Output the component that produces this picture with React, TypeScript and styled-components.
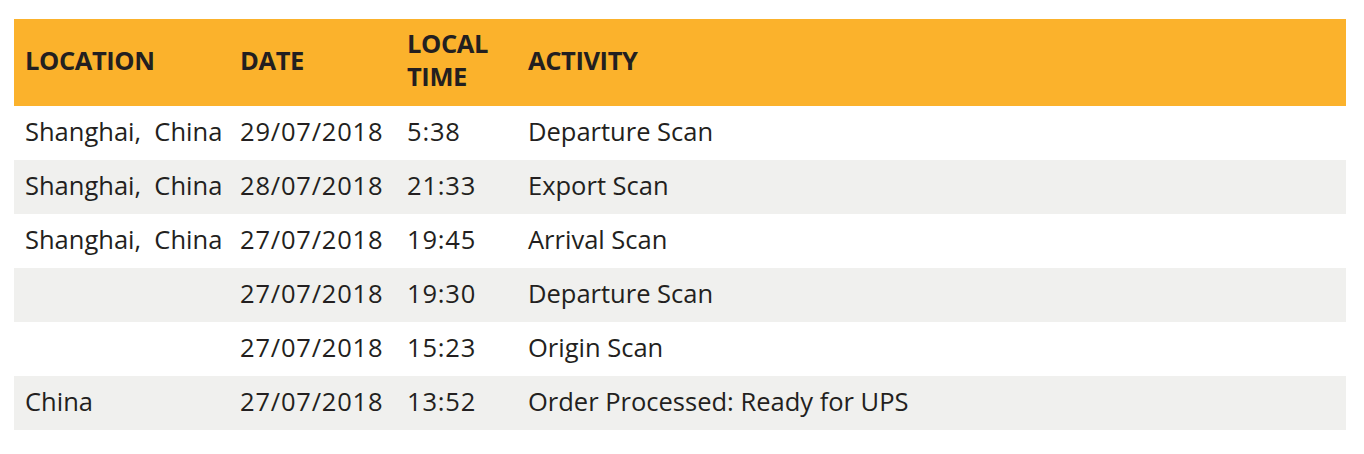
import React from 'react';
import styled, { createGlobalStyle } from 'styled-components';

// ----------
// Style
// ----------

const GlobalStyle = createGlobalStyle`
  body {
    margin: 0;
    background: #ffffff;
    font-family: "Open Sans", "Liberation Sans", sans-serif;
    color: #231f20;
  }
`;

const Wrapper = styled.div`
  padding: 19px 18px 0 14px;
`;

const Table = styled.table`
  width: 100%;
  border-collapse: collapse;
  table-layout: fixed;
`;

const HeadRow = styled.tr`
  background: #fbb22c;
  height: 87px;
`;

const HeadCell = styled.th<{ $width?: number }>`
  box-sizing: border-box;
  width: ${({ $width }) => ($width ? `${$width}px` : 'auto')};
  text-align: left;
  vertical-align: middle;
  padding: 0 11px 5px;
  font-size: 25.5px;
  line-height: 33px;
  font-weight: 700;
  letter-spacing: -0.4px;
  text-transform: uppercase;
`;

const Row = styled.tr<{ $shaded?: boolean }>`
  background: ${({ $shaded }) => ($shaded ? '#f0f0ee' : '#ffffff')};
  height: 54px;
`;

const Cell = styled.td<{ $numeric?: boolean }>`
  padding: 0 11px 4px;
  font-size: 25.5px;
  line-height: 30px;
  letter-spacing: ${({ $numeric }) => ($numeric ? '0.8px' : 'normal')};
  vertical-align: middle;
  white-space: nowrap;
`;

// ----------
// Data
// ----------

type Activity = {
  location: string;
  date: string;
  time: string;
  activity: string;
};

const activities: Activity[] = [
  { location: 'Shanghai,\u00a0 China', date: '29/07/2018', time: '5:38', activity: 'Departure Scan' },
  { location: 'Shanghai,\u00a0 China', date: '28/07/2018', time: '21:33', activity: 'Export Scan' },
  { location: 'Shanghai,\u00a0 China', date: '27/07/2018', time: '19:45', activity: 'Arrival Scan' },
  { location: '', date: '27/07/2018', time: '19:30', activity: 'Departure Scan' },
  { location: '', date: '27/07/2018', time: '15:23', activity: 'Origin Scan' },
  { location: 'China', date: '27/07/2018', time: '13:52', activity: 'Order Processed: Ready for UPS' },
];

// ----------

const App: React.FC = () => (
  <>
    <GlobalStyle />
    <Wrapper>
      <Table>
        <thead>
          <HeadRow>
            <HeadCell $width={215}>Location</HeadCell>
            <HeadCell $width={167}>Date</HeadCell>
            <HeadCell $width={121}>Local Time</HeadCell>
            <HeadCell>Activity</HeadCell>
          </HeadRow>
        </thead>
        <tbody>
          {activities.map((item, i) => (
            <Row key={`${item.date}-${item.time}`} $shaded={i % 2 === 1}>
              <Cell>{item.location}</Cell>
              <Cell $numeric>{item.date}</Cell>
              <Cell $numeric>{item.time}</Cell>
              <Cell>{item.activity}</Cell>
            </Row>
          ))}
        </tbody>
      </Table>
    </Wrapper>
  </>
);

export default App;
